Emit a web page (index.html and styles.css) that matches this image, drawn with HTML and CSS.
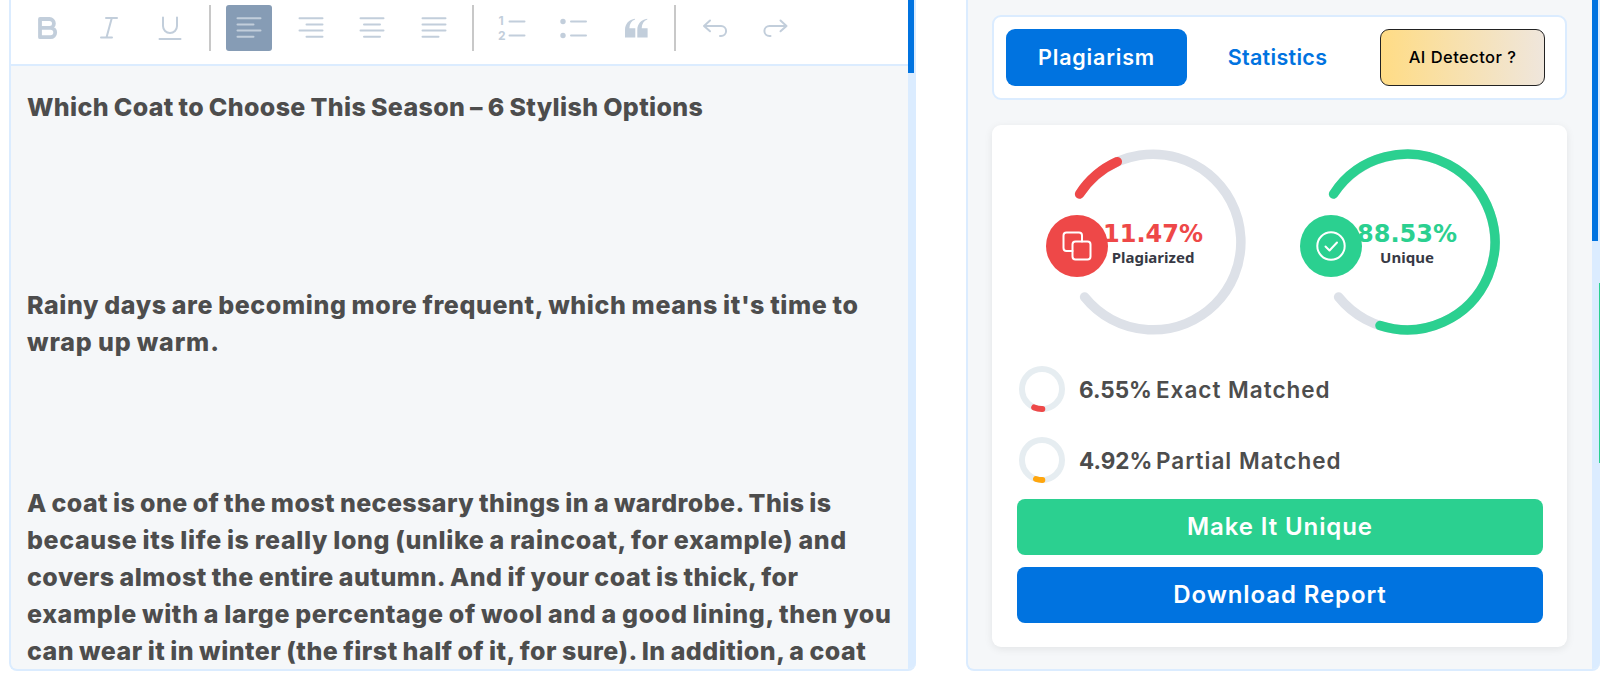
FILE: index.html
```html
<!DOCTYPE html>
<html lang="en">
<head>
    <meta charset="UTF-8">
    <title>Plagiarism Checker</title>
    <link rel="stylesheet" href="styles.css">
</head>
<body>
    <div class="editor">
        <div class="editor-main">
            <div class="toolbar">
                <button class="tool"><svg viewBox="0 0 46 46"><path class="bold" d="M16 14h9.500a4.400 4.400 0 0 1 0 8.800h-9.500zM16 22.800h10.500a4.700 4.700 0 0 1 0 9.400h-10.500z"/></svg></button>
                <button class="tool"><svg viewBox="0 0 46 46"><path d="M20 13h11M15 32.500h11M25.800 13l-5.300 19.500"/></svg></button>
                <button class="tool"><svg viewBox="0 0 46 46"><path d="M16 12.500v8.500a7 7 0 0 0 14 0v-8.500M12.500 34h21"/></svg></button>
                <span class="separator"></span>
                <button class="tool active"><svg viewBox="0 0 46 46"><path d="M11.500 13.300h23M11.500 19.400h16M11.500 25.600h23M11.500 31.700h16"/></svg></button>
                <button class="tool"><svg viewBox="0 0 46 46"><path d="M11.500 13.300h23M18.500 19.400h16M11.500 25.600h23M18.500 31.700h16"/></svg></button>
                <button class="tool"><svg viewBox="0 0 46 46"><path d="M11.500 13.300h23M15 19.400h16M11.500 25.600h23M15 31.700h16"/></svg></button>
                <button class="tool"><svg viewBox="0 0 46 46"><path d="M11.500 13.300h23M11.500 19.400h23M11.500 25.600h23M11.500 31.700h16"/></svg></button>
                <span class="separator"></span>
                <button class="tool"><svg viewBox="0 0 46 46"><text x="8.500" y="20">1</text><text x="8" y="35">2</text><path d="M19.500 16.500h15M19.500 30.500h15"/></svg></button>
                <button class="tool"><svg viewBox="0 0 46 46"><circle cx="12" cy="16.500" r="2.700"/><circle cx="12" cy="30.500" r="2.700"/><path d="M20 16.500h15M20 30.500h15"/></svg></button>
                <button class="tool"><svg viewBox="0 0 46 46"><path class="solid" d="M22 13.700c-6 .8-10 5-10 11.200v7.500h10.300v-9.200h-5.900c.1-4 2-7.200 5.600-8.600zM34.300 13.700c-6 .8-10 5-10 11.200v7.500h10.300v-9.200h-5.900c.1-4 2-7.200 5.600-8.600z"/></svg></button>
                <span class="separator"></span>
                <button class="tool"><svg viewBox="0 0 46 46"><path d="M18 15.500l-6 5.400 6 5.400M12 20.900h17a5 5 0 0 1 0 10.200h-1"/></svg></button>
                <button class="tool"><svg viewBox="0 0 46 46"><path d="M27.500 15.500l6 5.400-6 5.400M33.500 20.900h-17a5 5 0 0 0 0 10.200h1"/></svg></button>
            </div>
            <div class="document">
                <p class="title"><span class="line l1">Which Coat to Choose This Season – 6 Stylish Options</span></p>
                <p class="intro">
                    <span class="line l2">Rainy days are becoming more frequent, which means it's time to</span>
                    <span class="line l3">wrap up warm.</span>
                </p>
                <p>
                    <span class="line l4">A coat is one of the most necessary things in a wardrobe. This is</span>
                    <span class="line l5">because its life is really long (unlike a raincoat, for example) and</span>
                    <span class="line l6">covers almost the entire autumn. And if your coat is thick, for</span>
                    <span class="line l7">example with a large percentage of wool and a good lining, then you</span>
                    <span class="line l8">can wear it in winter (the first half of it, for sure). In addition, a coat</span>
                </p>
            </div>
        </div>
        <div class="scrollbar"><div class="thumb"></div></div>
    </div>

    <div class="results">
        <div class="results-main">
            <div class="tabs">
                <button class="tab selected">Plagiarism</button>
                <button class="tab">Statistics</button>
                <button class="detector">AI Detector ?</button>
            </div>
            <div class="card">
                <div class="gauges">
                    <div class="gauge red">
                        <svg class="dial" viewBox="-93 -93 186 186">
                            <path class="track" d="M-73.400 -48A87.800 87.800 0 1 1 -68.400 55"/>
                            <path class="value" d="M-73.400 -48A87.800 87.800 0 0 1 -35.700 -80.300"/>
                        </svg>
                        <div class="gauge-text"><strong>11.47%</strong><span>Plagiarized</span></div>
                        <svg class="badge" viewBox="0 0 62 62">
                            <circle class="disc" cx="31" cy="31" r="31"/>
                            <path d="M26.500 36h-6a3 3 0 0 1-3-3V20.500a3 3 0 0 1 3-3H33a3 3 0 0 1 3 3v6"/>
                            <rect x="26.500" y="26.500" width="18" height="18" rx="3"/>
                        </svg>
                    </div>
                    <div class="gauge green">
                        <svg class="dial" viewBox="-93 -93 186 186">
                            <path class="track" d="M-73.400 -48A87.800 87.800 0 1 1 -68.400 55"/>
                            <path class="value" d="M-73.400 -48A87.800 87.800 0 1 1 -27 83.500"/>
                        </svg>
                        <div class="gauge-text"><strong>88.53%</strong><span>Unique</span></div>
                        <svg class="badge" viewBox="0 0 62 62">
                            <circle class="disc" cx="31" cy="31" r="31"/>
                            <circle cx="31" cy="31" r="13.700"/>
                            <path d="M25.500 31.500l4 4 7.500-8"/>
                        </svg>
                    </div>
                </div>
                <div class="match">
                    <svg class="ring" viewBox="-23 -23 46 46"><circle r="20"/><path class="exact" d="M0.300 20A20 20 0 0 1 -7.800 18.400"/></svg>
                    <b>6.55%</b><span>Exact Matched</span>
                </div>
                <div class="match">
                    <svg class="ring" viewBox="-23 -23 46 46"><circle r="20"/><path class="partial" d="M0.300 20A20 20 0 0 1 -6 19"/></svg>
                    <b>4.92%</b><span>Partial Matched</span>
                </div>
                <button class="action unique">Make It Unique</button>
                <button class="action download">Download Report</button>
            </div>
        </div>
        <div class="scrollbar"><div class="thumb"></div><div class="side-tab"></div></div>
    </div>
</body>
</html>
```

FILE: styles.css
```css
* {
    box-sizing: border-box;
}

body {
    display: flex;
    gap: 50px;
    height: 675px;
    margin: 0;
    padding: 0 0 4px 9px;
    background-color: #fff;
    font-family: Inter, "Liberation Sans", sans-serif;
    color: #4d4d4d;
    overflow: hidden;
}

button {
    border: none;
    padding: 0;
    background: none;
    font-family: inherit;
}

/* Panels */
.editor,
.results {
    display: flex;
    height: 671px;
    border: 2px solid #dbecff;
    border-top: none;
    border-right: none;
    border-radius: 0 0 8px 8px;
    background-color: #f5f7f9;
    overflow: hidden;
}

.editor {
    width: 907px;
}

.results {
    width: 634px;
}

.editor-main,
.results-main {
    flex: 1;
    min-width: 0;
}

.scrollbar {
    width: 8px;
    background-color: #dbecff;
}

.thumb {
    width: 6px;
    height: 73px;
    background-color: #0073e0;
}

.results .thumb {
    height: 241px;
}

.side-tab {
    width: 1px;
    height: 180px;
    margin: 42px 0 0 7px;
    background-color: #2bd090;
}

/* Toolbar */
.toolbar {
    display: flex;
    align-items: center;
    gap: 15.5px;
    height: 66px;
    padding: 0 13px 8px;
    border-bottom: 2px solid #dbecff;
    background-color: #fff;
}

.tool {
    width: 46px;
    height: 46px;
    border-radius: 3px;
}

.tool.active {
    background-color: #869cb5;
}

.tool svg {
    display: block;
    fill: none;
    stroke: #c2cedb;
    stroke-width: 2;
    stroke-linecap: round;
    stroke-linejoin: round;
}

.tool .bold {
    stroke-width: 3.8;
}

.tool .solid,
.tool circle,
.tool text {
    fill: #c2cedb;
    stroke: none;
}

.tool text {
    font-size: 12px;
    font-weight: 700;
}

.separator {
    width: 2px;
    height: 46px;
    background-color: #c8c8c8;
}

/* Text */
.document {
    padding: 23px 0 0 16px;
    font-size: 25px;
    font-weight: 800;
    line-height: 37px;
    word-spacing: -1px;
}

.document p {
    margin: 0;
}

.document .title {
    margin-bottom: 161px;
}

.document .intro {
    margin-bottom: 124px;
}

.line {
    display: block;
    white-space: nowrap;
}

.l1 { letter-spacing: 0.35px; }
.l2 { letter-spacing: 0.61px; }
.l3 { letter-spacing: 0.85px; }
.l4 { letter-spacing: 0.42px; }
.l5 { letter-spacing: 0.63px; }
.l6 { letter-spacing: 0.48px; }
.l7 { letter-spacing: 0.65px; }
.l8 { letter-spacing: 0.48px; }

/* Tabs */
.results-main {
    padding: 15px 25px 0 24px;
}

.tabs {
    display: flex;
    height: 85px;
    padding: 12px;
    border: 2px solid #dbecff;
    border-radius: 9px;
    background-color: #fff;
}

.tab {
    width: 181px;
    height: 57px;
    padding-bottom: 2px;
    border-radius: 9px;
    color: #0073e0;
    font-size: 21.5px;
    font-weight: 600;
    letter-spacing: 0.3px;
}

.tab.selected {
    background-color: #0073e0;
    color: #fff;
    letter-spacing: 0.8px;
}

.detector {
    width: 165px;
    height: 57px;
    margin-left: 12px;
    padding-bottom: 1px;
    border: 1.5px solid #222;
    border-radius: 9px;
    background: linear-gradient(90deg, #ffdc85, #efe6dc);
    color: #000;
    font-size: 16.5px;
    font-weight: 500;
    letter-spacing: 0.45px;
}

/* Card */
.card {
    height: 522px;
    margin-top: 25px;
    padding: 25px 24px 0 25px;
    border-radius: 9px;
    background-color: #fff;
    box-shadow: 0 2px 8px rgba(0, 0, 0, 0.08);
}

.gauges {
    display: flex;
    gap: 68px;
    height: 216px;
    padding-left: 43px;
}

.gauge {
    position: relative;
    margin-top: -1px;
    width: 186px;
    height: 186px;
}

.red {
    --tone: #ee4848;
}

.green {
    --tone: #2bd090;
}

.dial {
    display: block;
    fill: none;
    stroke-width: 9.5;
    stroke-linecap: round;
}

.track {
    stroke: #dde1e8;
}

.value {
    stroke: var(--tone);
}

.gauge-text {
    position: absolute;
    top: 71px;
    left: 0;
    width: 100%;
    text-align: center;
}

.gauge-text strong {
    display: block;
    color: var(--tone);
    font: bold 24px/28px "DejaVu Sans", sans-serif;
}

.gauge-text span {
    display: block;
    color: #373945;
    font: bold 15px/18px "Noto Sans", sans-serif;
}

/* Icon disc lies over the start of the percentage */
.badge {
    position: absolute;
    top: 65.5px;
    left: -14px;
    width: 62px;
    height: 62px;
    fill: none;
    stroke: #fff;
    stroke-width: 2;
    stroke-linecap: round;
    stroke-linejoin: round;
}

.disc {
    fill: var(--tone);
    stroke: none;
}

.match {
    display: flex;
    align-items: center;
    height: 46px;
    margin-bottom: 25px;
    padding-left: 2px;
    font-size: 22.5px;
}

.match b {
    width: 77px;
    font-weight: 700;
}

.match span {
    font-weight: 600;
    letter-spacing: 1px;
}

.match + .match {
    margin-bottom: 16px;
}

.ring {
    width: 46px;
    height: 46px;
    margin-right: 14px;
    fill: none;
    stroke: #e6edf1;
    stroke-width: 6;
    stroke-linecap: round;
}

.exact {
    stroke: #ee4848;
}

.partial {
    stroke: #ffa60d;
}

.action {
    display: block;
    width: 526px;
    height: 56px;
    margin-bottom: 12px;
    padding-bottom: 2px;
    border-radius: 8px;
    color: #fff;
    font-size: 24px;
    font-weight: 600;
    letter-spacing: 0.9px;
}

.unique {
    background-color: #2bd090;
}

.download {
    background-color: #0073e0;
}
```
